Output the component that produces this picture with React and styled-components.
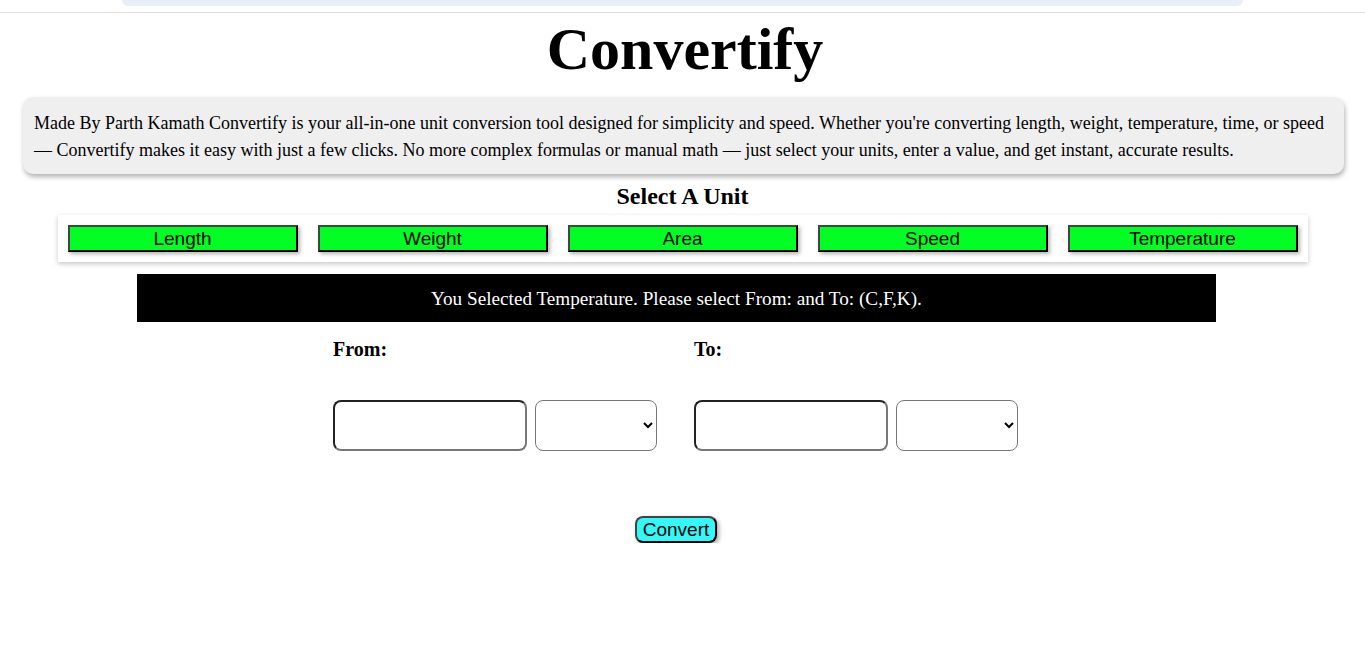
import React from "react";
import styled, { createGlobalStyle } from "styled-components";

const Global = createGlobalStyle`
  html, body { margin: 0; padding: 0; background: #fff; }
  body { font-family: "Liberation Serif", "Times New Roman", serif; color: #000; }
`;

const Header = styled.header`
  height: 12px;
  border-bottom: 1px solid #e0e0e0;
`;

const NavStrip = styled.div`
  margin: 0 122px 0 122px;
  height: 6px;
  background: #e9eef8;
  border-radius: 0 0 14px 14px;
`;

const Title = styled.h1`
  margin: 0;
  padding: 2px 0 0 5px;
  font-size: 60px;
  font-weight: bold;
  text-align: center;
  line-height: 69px;
`;

const About = styled.p`
  margin: 13px 21px 0 23px;
  padding: 13px 11px 10px;
  background: #efefef;
  border-radius: 10px;
  box-shadow: 1px 3px 5px rgba(0, 0, 0, 0.3);
  font-size: 18px;
  line-height: 27px;
`;

const Heading = styled.h2`
  margin: 8px 0 5px;
  font-size: 24px;
  line-height: 28px;
  text-align: center;
`;

const UnitBar = styled.nav`
  margin: 0 auto;
  width: 1250px;
  box-sizing: border-box;
  padding: 10px;
  display: flex;
  gap: 20px;
  background: #fff;
  box-shadow: 0 2px 5px rgba(0, 0, 0, 0.22);
`;

const UnitButton = styled.button`
  width: 230px;
  height: 27px;
  padding: 0;
  background: #00ff22;
  border: 2px solid;
  border-color: #444 #000 #000 #444;
  box-shadow: 2px 2px 4px rgba(0, 0, 0, 0.3);
  font-family: "Liberation Sans", Arial, sans-serif;
  font-size: 19px;
  line-height: 21px;
  color: #000;
  cursor: pointer;
`;

const Banner = styled.div`
  margin: 12px 0 0 137px;
  width: 1079px;
  height: 48px;
  background: #000;
  color: #fff;
  display: flex;
  align-items: center;
  justify-content: center;
  font-size: 19.2px;
  padding-top: 2px;
  box-sizing: border-box;
`;

const Form = styled.div`
  margin: 16px 0 0 333px;
  display: flex;
  gap: 37px;
`;

const Group = styled.div`
  display: flex;
  flex-direction: column;
`;

const Label = styled.label`
  font-size: 20px;
  font-weight: bold;
  line-height: 22px;
  height: 22px;
`;

const Fields = styled.div`
  margin-top: 40px;
  display: flex;
  gap: 8px;
`;

const NumberInput = styled.input`
  width: 194px;
  height: 51px;
  box-sizing: border-box;
  border: 2px solid;
  border-color: #222 #777 #777 #222;
  border-radius: 8px;
  background: #fff;
  font-size: 18px;
  padding: 0 6px;
`;

const UnitSelect = styled.select`
  width: 122px;
  height: 51px;
  box-sizing: border-box;
  border: 1px solid #767676;
  border-radius: 8px;
  background: #fff;
  font-size: 16px;
`;

const ConvertRow = styled.div`
  margin-top: 65px;
  display: flex;
  justify-content: center;
  padding-right: 13px;
`;

const ConvertButton = styled.button`
  height: 27px;
  padding: 0 6px;
  background: #33f8f8;
  border: 2px solid;
  border-color: #444 #000 #000 #444;
  border-radius: 8px;
  box-shadow: 2px 2px 4px rgba(0, 0, 0, 0.35);
  font-family: "Liberation Sans", Arial, sans-serif;
  font-size: 19px;
  line-height: 21px;
  color: #000;
  cursor: pointer;
`;

const units = ["Length", "Weight", "Area", "Speed", "Temperature"];

export default function App() {
  return (
    <>
      <Global />
      <Header>
        <NavStrip />
      </Header>
      <Title>Convertify</Title>
      <About>
        Made By Parth Kamath Convertify is your all-in-one unit conversion tool designed for simplicity and speed. Whether you're converting length, weight, temperature, time, or speed — Convertify makes it easy with just a few clicks. No more complex formulas or manual math — just select your units, enter a value, and get instant, accurate results.
      </About>
      <Heading>Select A Unit</Heading>
      <UnitBar>
        {units.map((u) => (
          <UnitButton key={u}>{u}</UnitButton>
        ))}
      </UnitBar>
      <Banner>You Selected Temperature. Please select From: and To: (C,F,K).</Banner>
      <Form>
        <Group>
          <Label>From:</Label>
          <Fields>
            <NumberInput type="number" />
            <UnitSelect defaultValue="">
              <option value=""></option>
              <option value="C">C</option>
              <option value="F">F</option>
              <option value="K">K</option>
            </UnitSelect>
          </Fields>
        </Group>
        <Group>
          <Label>To:</Label>
          <Fields>
            <NumberInput type="number" />
            <UnitSelect defaultValue="">
              <option value=""></option>
              <option value="C">C</option>
              <option value="F">F</option>
              <option value="K">K</option>
            </UnitSelect>
          </Fields>
        </Group>
      </Form>
      <ConvertRow>
        <ConvertButton>Convert</ConvertButton>
      </ConvertRow>
    </>
  );
}
